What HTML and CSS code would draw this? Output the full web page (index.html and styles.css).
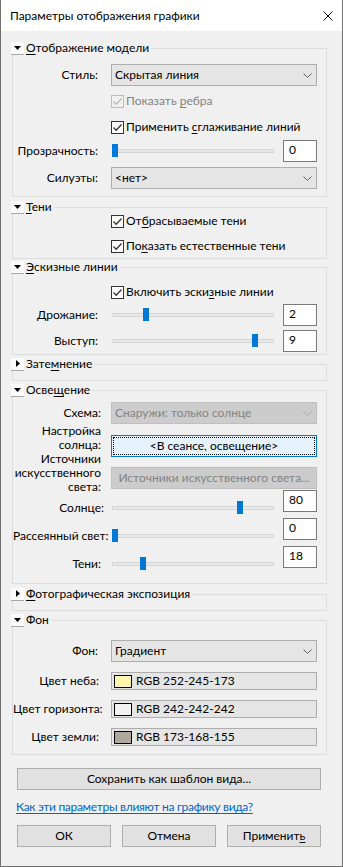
FILE: index.html
```html
<!DOCTYPE html>
<html lang="ru">
<head>
<meta charset="utf-8">
<title>Параметры отображения графики</title>
<link rel="stylesheet" href="styles.css">
</head>
<body>
<div class="window">
  <header class="titlebar">
    <span class="title">Параметры отображения графики</span>
    <svg class="close" width="10" height="10" viewBox="0 0 10 10"><path d="M0.5 0.5L9.5 9.5M9.5 0.5L0.5 9.5" stroke="#000" stroke-width="1" fill="none"/></svg>
  </header>
  <main class="content">
    <section class="group pb7">
      <div class="ghead"><span class="exp"><svg width="7" height="4" viewBox="0 0 7 4"><path d="M0 0H7L3.5 4Z"/></svg></span><span class="gtitle"><u>О</u>тображение модели</span></div>
      <div class="row mt9"><span class="lab">Стиль:</span><div class="combo"><span>Скрытая линия</span><svg class="chev" width="9" height="5" viewBox="0 0 9 5"><path d="M0.5 0.5L4.5 4.5L8.5 0.5"/></svg></div></div>
      <div class="check mt8 disabled"><span class="box"><svg width="11" height="11" viewBox="0 0 11 11"><path d="M1.5 5.5L4.2 8.2L9.5 2.5"/></svg></span><span class="ctext">Показать <u>р</u>ебра</span></div>
      <div class="check mt12"><span class="box"><svg width="11" height="11" viewBox="0 0 11 11"><path d="M1.5 5.5L4.2 8.2L9.5 2.5"/></svg></span><span class="ctext">Применить <u>с</u>глаживание линий</span></div>
      <div class="row mt6"><span class="lab">Прозрачность:</span><div class="slider"><div class="track"><span class="thumb" style="--v:0"></span></div><div class="num">0</div></div></div>
      <div class="row mt5"><span class="lab">Силуэты:</span><div class="combo"><span>&lt;нет&gt;</span><svg class="chev" width="9" height="5" viewBox="0 0 9 5"><path d="M0.5 0.5L4.5 4.5L8.5 0.5"/></svg></div></div>
    </section>

    <section class="group mt10 pb5">
      <div class="ghead"><span class="exp"><svg width="7" height="4" viewBox="0 0 7 4"><path d="M0 0H7L3.5 4Z"/></svg></span><span class="gtitle"><u>Т</u>ени</span></div>
      <div class="check mt0"><span class="box"><svg width="11" height="11" viewBox="0 0 11 11"><path d="M1.5 5.5L4.2 8.2L9.5 2.5"/></svg></span><span class="ctext">От<u>б</u>расываемые тени</span></div>
      <div class="check mt11"><span class="box"><svg width="11" height="11" viewBox="0 0 11 11"><path d="M1.5 5.5L4.2 8.2L9.5 2.5"/></svg></span><span class="ctext">По<u>к</u>азать естественные тени</span></div>
    </section>

    <section class="group mt8 pb2">
      <div class="ghead"><span class="exp"><svg width="7" height="4" viewBox="0 0 7 4"><path d="M0 0H7L3.5 4Z"/></svg></span><span class="gtitle"><u>Э</u>скизные линии</span></div>
      <div class="check mt11"><span class="box"><svg width="11" height="11" viewBox="0 0 11 11"><path d="M1.5 5.5L4.2 8.2L9.5 2.5"/></svg></span><span class="ctext">Включить эски<u>з</u>ные линии</span></div>
      <div class="row mt5"><span class="lab">Дрожание:</span><div class="slider"><div class="track"><span class="thumb" style="--v:0.2"></span></div><div class="num">2</div></div></div>
      <div class="row mt4"><span class="lab">Выступ:</span><div class="slider"><div class="track"><span class="thumb" style="--v:0.9"></span></div><div class="num">9</div></div></div>
    </section>

    <section class="group mt9 pb9">
      <div class="ghead"><span class="exp"><svg width="4" height="7" viewBox="0 0 4 7"><path d="M0 0L4 3.5L0 7Z"/></svg></span><span class="gtitle">Зате<u>м</u>нение</span></div>
    </section>

    <section class="group mt9 pb5">
      <div class="ghead"><span class="exp"><svg width="7" height="4" viewBox="0 0 7 4"><path d="M0 0H7L3.5 4Z"/></svg></span><span class="gtitle">Осве<u>щ</u>ение</span></div>
      <div class="row mt5"><span class="lab m3">Схема:</span><div class="combo off"><span>Снаружи: только солнце</span><svg class="chev" width="9" height="5" viewBox="0 0 9 5"><path d="M0.5 0.5L4.5 4.5L8.5 0.5"/></svg></div></div>
      <div class="row mt11"><span class="lab m3 l2">Настройка солнца:</span><button class="btn focus">&lt;В сеансе, освещение&gt;</button></div>
      <div class="row mt10"><span class="lab m3 l3">Источники искусственного света:</span><button class="btn off">Источники искусственного света...</button></div>
      <div class="row tall mt5"><span class="lab m6">Солнце:</span><div class="slider"><div class="track"><span class="thumb" style="--v:0.8"></span></div><div class="num up">80</div></div></div>
      <div class="row tall"><span class="lab m8 nowrap">Рассеянный свет:</span><div class="slider"><div class="track"><span class="thumb" style="--v:0"></span></div><div class="num up">0</div></div></div>
      <div class="row tall"><span class="lab m3">Тени:</span><div class="slider"><div class="track"><span class="thumb" style="--v:0.18"></span></div><div class="num up">18</div></div></div>
    </section>

    <section class="group mt10 pb9">
      <div class="ghead"><span class="exp"><svg width="4" height="7" viewBox="0 0 4 7"><path d="M0 0L4 3.5L0 7Z"/></svg></span><span class="gtitle"><u>Ф</u>отографическая экспозиция</span></div>
    </section>

    <section class="group mt9 pb8">
      <div class="ghead"><span class="exp"><svg width="7" height="4" viewBox="0 0 7 4"><path d="M0 0H7L3.5 4Z"/></svg></span><span class="gtitle">Фон</span></div>
      <div class="row mt13"><span class="lab">Фон:</span><div class="combo"><span>Градиент</span><svg class="chev" width="9" height="5" viewBox="0 0 9 5"><path d="M0.5 0.5L4.5 4.5L8.5 0.5"/></svg></div></div>
      <div class="row short mt10"><span class="lab m1">Цвет неба:</span><div class="cfield"><span class="swatch" style="background:rgb(252,245,173)"></span><span>RGB 252-245-173</span></div></div>
      <div class="row short mt10"><span class="lab m3 nowrap">Цвет горизонта:</span><div class="cfield"><span class="swatch" style="background:rgb(242,242,242)"></span><span>RGB 242-242-242</span></div></div>
      <div class="row short mt10"><span class="lab m1">Цвет земли:</span><div class="cfield"><span class="swatch" style="background:rgb(173,168,155)"></span><span>RGB 173-168-155</span></div></div>
    </section>

    <button class="btn save">Сохранить как шаблон вида...</button>
    <a class="help" href="#">Как эти параметры влияют на графику вида?</a>
    <div class="actions">
      <button class="btn act">ОК</button>
      <button class="btn act">Отмена</button>
      <button class="btn act">Применит<u>ь</u></button>
    </div>
  </main>
</div>
</body>
</html>
```

FILE: styles.css
```css
* { box-sizing: border-box; }
html, body { margin: 0; padding: 0; background: #f0f0f0; }
body {
  font-family: Lato, "Liberation Sans", sans-serif;
  font-size: 12px;
  color: #000;
}
u { text-decoration: underline; text-underline-offset: 2px; }

.window {
  width: 343px;
  height: 867px;
  border: 1px solid #707070;
  border-top: 0;
  background: #f0f0f0;
  overflow: hidden;
}

.titlebar {
  height: 31px;
  background: #fff;
  display: flex;
  align-items: center;
  justify-content: space-between;
  padding: 0 9px 0 9px;
}
.title { font-size: 12px; line-height: 16px; }
.close { display: block; }

.content { padding: 17px 0 0 11px; }

.group {
  width: 315px;
  border: 1px solid #dcdcdc;
}
.ghead {
  display: flex;
  align-items: center;
  height: 14px;
  margin: -8px 0 0 -2px;
}
.exp {
  width: 13px;
  height: 13px;
  background: #fbfbfb;
  border-bottom: 1px solid #a8a8a8;
  display: flex;
  align-items: center;
  justify-content: center;
}
.exp svg { display: block; fill: #000; }
.gtitle {
  background: #f0f0f0;
  padding: 0 2px 0 2px;
  line-height: 14px;
  white-space: nowrap;
}

.row {
  display: grid;
  grid-template-columns: 85px 206px;
  column-gap: 13px;
  grid-template-rows: 22px;
  align-items: center;
}
.row.tall { grid-template-rows: 28px; }
.row.short { grid-template-rows: 18px; }

.lab {
  text-align: right;
  line-height: 14px;
}
.lab.m1 { margin-right: -1px; }
.lab.m3 { margin-right: -3px; }
.lab.m6 { margin-right: -6px; }
.lab.m8 { margin-right: -8px; }
.lab.nowrap { white-space: nowrap; }
.lab.l2 { margin-top: -16px; }
.lab.l3 { margin-top: -10px; }

.combo {
  height: 22px;
  border: 1px solid #adadad;
  background: #e5e5e5;
  display: flex;
  align-items: center;
  justify-content: space-between;
  padding: 0 4px 0 3px;
  line-height: 16px;
}
.chev { display: block; fill: none; stroke: #606060; stroke-width: 1; }
.combo.off { background: #cccccc; border-color: #bfbfbf; color: #838383; }
.combo.off .chev { stroke: #a8a8a8; }

.check {
  display: flex;
  align-items: center;
  height: 14px;
  margin-left: 98px;
}
.box {
  width: 13px;
  height: 13px;
  border: 1px solid #333;
  background: #fff;
  display: flex;
  align-items: center;
  justify-content: center;
}
.box svg { display: block; fill: none; stroke: #333; stroke-width: 1.3; }
.ctext { margin-left: 2px; line-height: 14px; white-space: nowrap; }
.check.disabled .box { border-color: #bcbcbc; background: transparent; }
.check.disabled .box svg { stroke: #bcbcbc; }
.check.disabled .ctext { color: #838383; }

.slider {
  display: flex;
  align-items: center;
  align-self: stretch;
}
.track {
  position: relative;
  width: 162px;
  height: 4px;
  margin-left: 1px;
  background: #e7e7e7;
  border: 1px solid #d6d6d6;
}
.thumb {
  position: absolute;
  top: -6px;
  left: calc(var(--v) * 156px - 1px);
  width: 6px;
  height: 13px;
  background: #0078d7;
}
.num {
  width: 34px;
  height: 22px;
  margin-left: auto;
  background: #fff;
  border: 1px solid #7a7a7a;
  padding: 1px 0 0 5px;
  line-height: 16px;
}
.num.up { align-self: flex-start; margin-top: -4px; }

.btn {
  font: inherit;
  color: #000;
  height: 22px;
  border: 1px solid #adadad;
  background: #e1e1e1;
  padding: 0;
  margin: 0;
  line-height: 16px;
  text-align: center;
  display: block;
}
.row .btn { width: 206px; }
.btn.focus {
  background: #e5f1fb;
  border: 1px solid #0078d7;
  outline: 1px dotted #000;
  outline-offset: -3px;
}
.btn.off { background: #cccccc; border-color: #bfbfbf; color: #838383; }

.cfield {
  height: 18px;
  border: 1px solid #adadad;
  background: #e5e5e5;
  display: flex;
  align-items: center;
  padding-left: 2px;
  line-height: 16px;
}
.swatch {
  width: 18px;
  height: 13px;
  border: 1px solid #000;
  margin-right: 4px;
}

.save {
  width: 304px;
  margin: 13px 0 0 5px;
}
.help {
  display: block;
  width: max-content;
  margin: 9px 0 0 4px;
  line-height: 16px;
  color: #0066cc;
  letter-spacing: -0.3px;
  text-decoration: underline;
  text-underline-offset: 2px;
}
.actions {
  display: flex;
  gap: 11px;
  margin: 10px 0 0 5px;
}
.act { width: 94px; }

.mt0 { margin-top: 0; }
.mt4 { margin-top: 4px; }
.mt5 { margin-top: 5px; }
.mt6 { margin-top: 6px; }
.mt8 { margin-top: 8px; }
.mt9 { margin-top: 9px; }
.mt10 { margin-top: 10px; }
.mt11 { margin-top: 11px; }
.mt12 { margin-top: 12px; }
.mt13 { margin-top: 13px; }
.pb2 { padding-bottom: 2px; }
.pb5 { padding-bottom: 5px; }
.pb7 { padding-bottom: 7px; }
.pb8 { padding-bottom: 8px; }
.pb9 { padding-bottom: 9px; }
```
